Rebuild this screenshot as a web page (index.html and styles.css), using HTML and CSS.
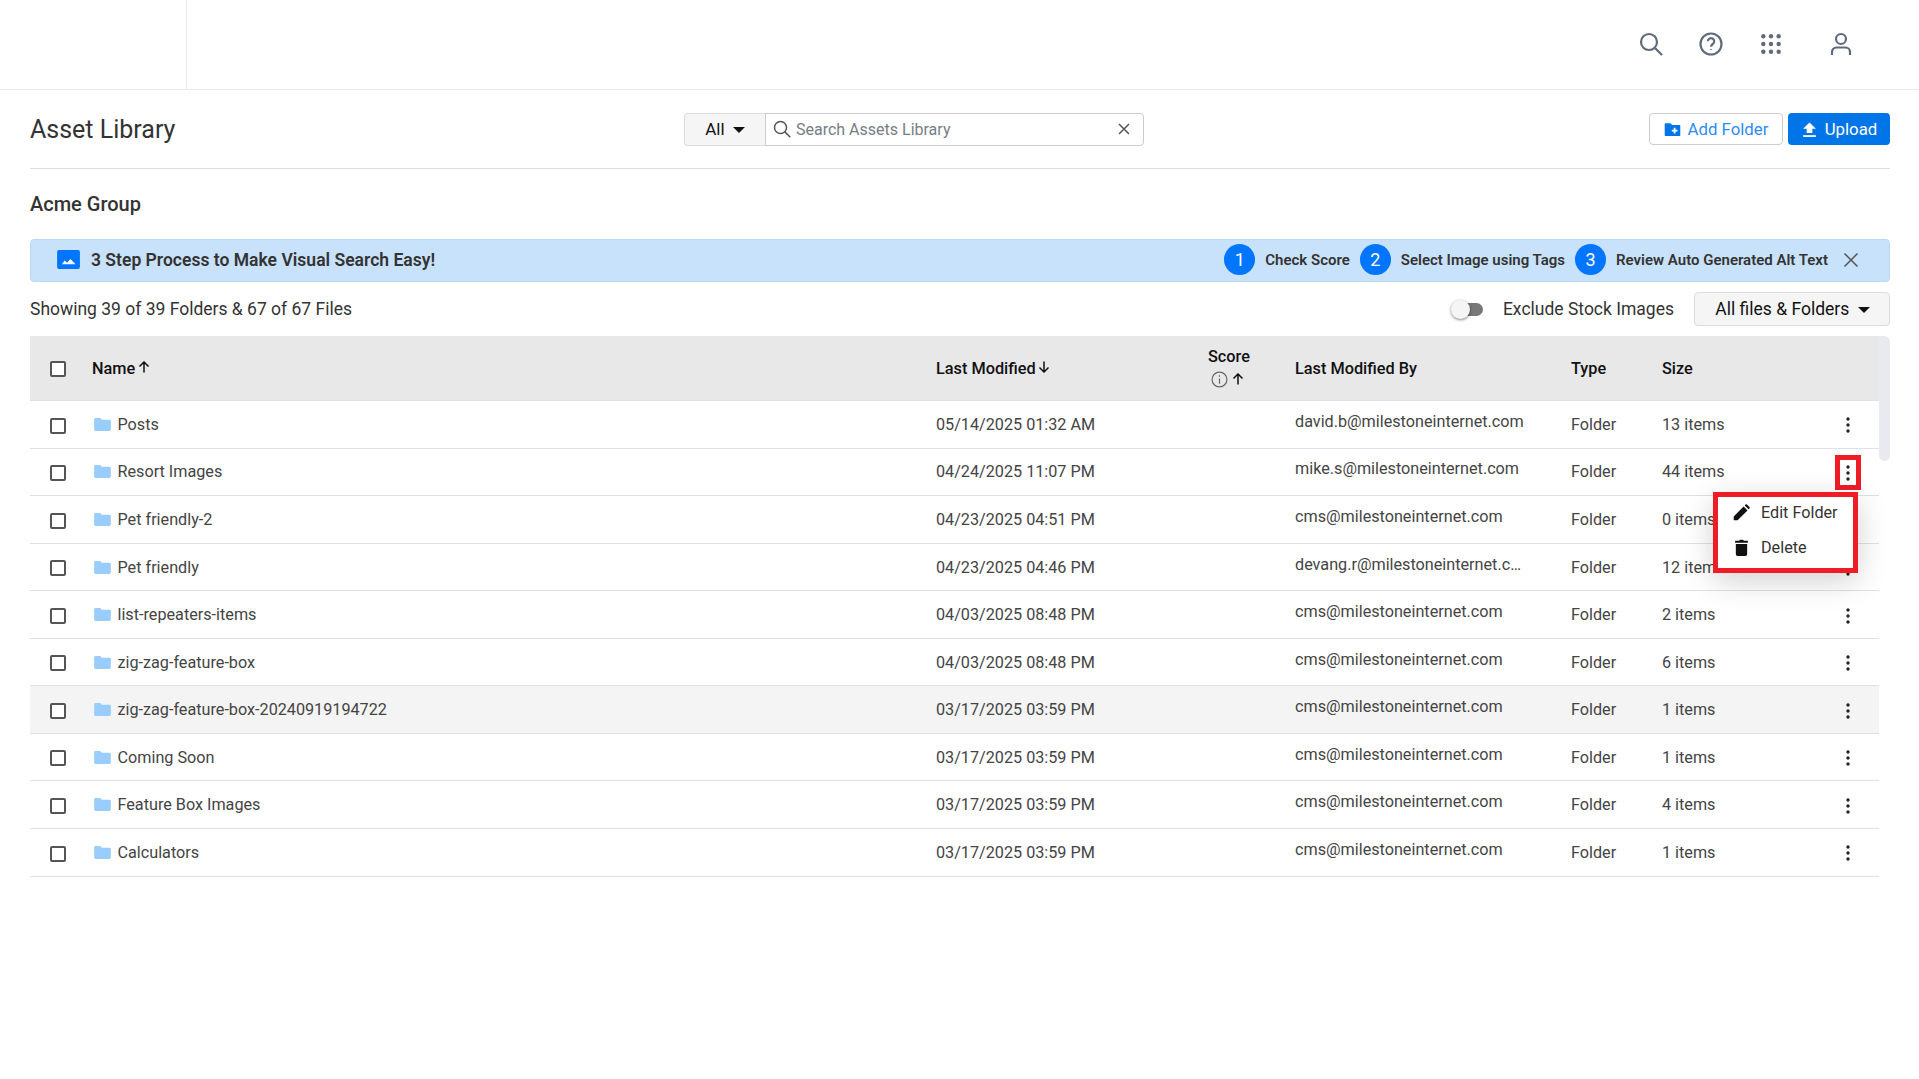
FILE: index.html
```html
<!DOCTYPE html>
<html lang="en">
<head>
    <meta charset="UTF-8">
    <title>Asset Library</title>
    <link rel="stylesheet" href="styles.css">
</head>
<body>
    <header class="topbar">
        <div class="logo-slot"></div>
        <div class="top-icons">
            <svg class="top-icon" viewBox="0 0 24 24"><circle cx="10" cy="10" r="8"/><path d="M16 16l7 7"/></svg>
            <svg class="top-icon" viewBox="0 0 24 24"><circle cx="12" cy="12" r="10.500"/><path d="M8.800 9.300a3.200 3.200 0 1 1 5 2.700c-1.100.8-1.800 1.400-1.800 2.700"/><path d="M12 17.200v.8"/></svg>
            <svg class="top-icon dots" viewBox="-0.500 -0.500 25 25"><circle cx="4" cy="4" r="2.300"/><circle cx="12" cy="4" r="2.300"/><circle cx="20" cy="4" r="2.300"/><circle cx="4" cy="12" r="2.300"/><circle cx="12" cy="12" r="2.300"/><circle cx="20" cy="12" r="2.300"/><circle cx="4" cy="20" r="2.300"/><circle cx="12" cy="20" r="2.300"/><circle cx="20" cy="20" r="2.300"/></svg>
            <svg class="top-icon" viewBox="0 0 24 24"><circle cx="12" cy="7" r="5"/><path d="M3 23v-3a4.500 4.500 0 0 1 4.500-4.500h9A4.500 4.500 0 0 1 21 20v3"/></svg>
        </div>
    </header>

    <main class="page">
        <div class="title-row">
            <h1>Asset Library</h1>
            <div class="search-group">
                <button class="search-type">All <span class="caret"></span></button>
                <div class="search-box">
                    <svg class="search-glass" viewBox="0 0 24 24"><circle cx="10" cy="10" r="8"/><path d="M15.500 15.500l7.500 7.500"/></svg>
                    <span class="placeholder">Search Assets Library</span>
                    <svg class="search-clear" viewBox="0 0 24 24"><path d="M2 2l20 20M22 2L2 22"/></svg>
                </div>
            </div>
            <div class="title-actions">
                <button class="btn-outline">
                    <svg viewBox="0 0 24 24"><path d="M2 3h7l2.500 2.500H22a1 1 0 0 1 1 1V20a1 1 0 0 1-1 1H2a1 1 0 0 1-1-1V4a1 1 0 0 1 1-1z" fill="#0075e8"/><path d="M15 9.500v8M11 13.500h8" stroke="#fff" stroke-width="2.400"/></svg>
                    Add Folder
                </button>
                <button class="btn-primary">
                    <svg viewBox="0 0 24 24"><path d="M12 2l9 9h-5v6H8v-6H3z" fill="#fff"/><path d="M3 20h18v2.500H3z" fill="#fff"/></svg>
                    Upload
                </button>
            </div>
        </div>

        <h2 class="group-name">Acme Group</h2>

        <div class="banner">
            <svg class="banner-icon" viewBox="0 0 24 20"><rect width="24" height="20" rx="2" fill="#0075ff"/><path d="M5 15l3-4 2.500 2.500L14 9.500l5.500 5.500z" fill="#fff"/></svg>
            <strong class="banner-title">3 Step Process to Make Visual Search Easy!</strong>
            <div class="steps">
                <span class="step-num">1</span><span class="step-label">Check Score</span>
                <span class="step-num">2</span><span class="step-label">Select Image using Tags</span>
                <span class="step-num">3</span><span class="step-label">Review Auto Generated Alt Text</span>
                <svg class="banner-close" viewBox="0 0 16 16"><path d="M1.500 1.500l13 13M14.500 1.500l-13 13"/></svg>
            </div>
        </div>

        <div class="filter-row">
            <span class="showing">Showing 39 of 39 Folders &amp; 67 of 67 Files</span>
            <div class="filters">
                <span class="toggle"><span class="toggle-knob"></span></span>
                <span class="toggle-label">Exclude Stock Images</span>
                <button class="filter-btn">All files &amp; Folders <span class="caret"></span></button>
            </div>
        </div>

        <div class="table-wrap">
            <table class="assets">
                <thead>
                    <tr>
                        <th class="col-check"><span class="check"></span></th>
                        <th class="col-name">Name<svg class="sort" viewBox="0 0 12 12"><path d="M6 11.500V1M1.500 5.500L6 1l4.500 4.500"/></svg></th>
                        <th class="col-date"><span class="date-head">Last Modified<svg class="sort" viewBox="0 0 12 12"><path d="M6 .5V11M1.500 6.500L6 11l4.500-4.500"/></svg></span></th>
                        <th class="col-score">
                            <span class="score-title">Score</span>
                            <span class="score-icons">
                                <svg class="info" viewBox="0 0 16 16"><circle cx="8" cy="8" r="7"/><path d="M8 7v5M8 4v1.500"/></svg>
                                <svg class="sort" viewBox="0 0 12 12"><path d="M6 11.500V1M1.500 5.500L6 1l4.500 4.500"/></svg>
                            </span>
                        </th>
                        <th class="col-by">Last Modified By</th>
                        <th class="col-type">Type</th>
                        <th class="col-size">Size</th>
                        <th class="col-more"></th>
                    </tr>
                </thead>
                <tbody id="rows"></tbody>
            </table>
            <div class="scroll-thumb"></div>

            <div class="row-menu">
                <div class="menu-item">
                    <svg viewBox="0 0 24 24"><path d="M1 23v-5.500L15 3.500 20.500 9 6.500 23zM16.500 2l1.200-1.200a1.500 1.500 0 0 1 2 0l3.500 3.500a1.500 1.500 0 0 1 0 2L22 7.500z"/></svg>
                    Edit Folder
                </div>
                <div class="menu-item">
                    <svg viewBox="0 0 24 24"><path d="M4 7h16v14.500a2.500 2.500 0 0 1-2.500 2.500h-11A2.500 2.500 0 0 1 4 21.500zM3 2.500h5.500L10 1h4l1.500 1.500H21v2.800H3z"/></svg>
                    Delete
                </div>
            </div>
        </div>
    </main>

    <script>
        const folders = [
            ['Posts', '05/14/2025 01:32 AM', 'david.b@milestoneinternet.com', '13 items'],
            ['Resort Images', '04/24/2025 11:07 PM', 'mike.s@milestoneinternet.com', '44 items'],
            ['Pet friendly-2', '04/23/2025 04:51 PM', 'cms@milestoneinternet.com', '0 items'],
            ['Pet friendly', '04/23/2025 04:46 PM', 'devang.r@milestoneinternet.c…', '12 items'],
            ['list-repeaters-items', '04/03/2025 08:48 PM', 'cms@milestoneinternet.com', '2 items'],
            ['zig-zag-feature-box', '04/03/2025 08:48 PM', 'cms@milestoneinternet.com', '6 items'],
            ['zig-zag-feature-box-20240919194722', '03/17/2025 03:59 PM', 'cms@milestoneinternet.com', '1 items'],
            ['Coming Soon', '03/17/2025 03:59 PM', 'cms@milestoneinternet.com', '1 items'],
            ['Feature Box Images', '03/17/2025 03:59 PM', 'cms@milestoneinternet.com', '4 items'],
            ['Calculators', '03/17/2025 03:59 PM', 'cms@milestoneinternet.com', '1 items']
        ];

        const folderIcon = '<svg class="folder" viewBox="0 0 18 14"><path d="M1.500 0h5l2 2h8A1.500 1.500 0 0 1 18 3.500v9a1.500 1.500 0 0 1-1.500 1.500h-15A1.500 1.500 0 0 1 0 12.500v-11A1.500 1.500 0 0 1 1.500 0z"/></svg>';
        const moreIcon = '<svg class="more" viewBox="0 0 4 16"><circle cx="2" cy="2" r="1.700"/><circle cx="2" cy="8" r="1.700"/><circle cx="2" cy="14" r="1.700"/></svg>';

        document.getElementById('rows').innerHTML = folders.map((f, i) => `
            <tr class="${i === 6 ? 'hovered' : ''}">
                <td><span class="check"></span></td>
                <td><span class="name-cell">${folderIcon}${f[0]}</span></td>
                <td>${f[1]}</td>
                <td></td>
                <td><span class="by-cell">${f[2]}</span></td>
                <td>Folder</td>
                <td>${f[3]}</td>
                <td class="more-cell"><span class="${i === 1 ? 'more-box' : 'more-plain'}">${moreIcon}</span></td>
            </tr>`).join('');
    </script>
</body>
</html>
```

FILE: styles.css
```css
* {
    margin: 0;
    padding: 0;
    box-sizing: border-box;
}

body {
    font-family: Roboto, "Liberation Sans", sans-serif;
    background-color: #fff;
    color: #212529;
    height: 1079px;
    overflow: hidden;
}

button {
    font-family: inherit;
    cursor: pointer;
}

.topbar {
    height: 90px;
    display: flex;
    justify-content: space-between;
    border-bottom: 1px solid #e9e9e9;
}

.logo-slot {
    width: 187px;
    border-right: 1px solid #e9e9e9;
}

.top-icons {
    display: flex;
    align-items: center;
    gap: 36px;
    padding-right: 66px;
    padding-bottom: 1px;
}

.top-icon {
    width: 24px;
    height: 24px;
    fill: none;
    stroke: #5f6b7c;
    stroke-width: 2.200;
}

.top-icon.dots {
    fill: #5f6b7c;
    stroke: none;
}

.top-icon:last-child {
    margin-left: 10px;
}

.page {
    padding: 0 29px 0 30px;
}

.title-row {
    height: 79px;
    display: grid;
    grid-template-columns: 654px 460px 1fr;
    align-items: center;
    border-bottom: 1px solid #dedede;
}

h1 {
    font-size: 25px;
    font-weight: 400;
    color: #333;
}

.search-group {
    display: flex;
    height: 33px;
}

.search-type {
    width: 81px;
    background-color: #f5f5f5;
    border: 1px solid #dcdcdc;
    border-right: 0;
    border-radius: 4px 0 0 4px;
    font-size: 17px;
    color: #111;
}

.caret {
    display: inline-block;
    width: 0;
    height: 0;
    margin-left: 4px;
    vertical-align: 2px;
    border-left: 6px solid transparent;
    border-right: 6px solid transparent;
    border-top: 6px solid #111;
}

.search-box {
    flex: 1;
    display: flex;
    align-items: center;
    border: 1px solid #ccc;
    border-radius: 0 4px 4px 0;
    padding: 0 13px 0 7px;
}

.search-glass {
    width: 18px;
    height: 18px;
    fill: none;
    stroke: #555;
    stroke-width: 2;
    margin-right: 5px;
}

.placeholder {
    flex: 1;
    font-size: 16px;
    color: #757d86;
}

.search-clear {
    width: 12px;
    height: 12px;
    fill: none;
    stroke: #555;
    stroke-width: 3;
}

.title-actions {
    display: flex;
    justify-content: flex-end;
    gap: 5px;
}

.btn-outline,
.btn-primary {
    height: 32px;
    display: flex;
    align-items: center;
    justify-content: center;
    gap: 7px;
    font-size: 16.800px;
    border-radius: 4px;
}

.btn-outline svg,
.btn-primary svg {
    width: 17px;
    height: 17px;
}

.btn-outline {
    width: 134px;
    background-color: #fff;
    border: 1px solid #ccc;
    color: #2f8cf5;
}

.btn-primary {
    width: 102px;
    background-color: #0075e8;
    border: 0;
    color: #fff;
}

.group-name {
    font-size: 20px;
    font-weight: 500;
    color: #333;
    margin-top: 24px;
    height: 46px;
    line-height: 22px;
}

.banner {
    height: 43px;
    display: flex;
    align-items: center;
    background-color: #c9e2fc;
    border: 1px solid #b9d8f8;
    border-radius: 4px;
    padding: 0 30px 2px 26px;
}

.banner-icon {
    width: 23px;
    height: 19px;
    margin-right: 11px;
}

.banner-title {
    flex: 1;
    font-size: 17.550px;
    font-weight: 600;
    color: #333;
}

.steps {
    display: flex;
    align-items: center;
}

.step-num {
    width: 31px;
    height: 31px;
    border-radius: 50%;
    background-color: #0075ff;
    color: #fff;
    font-size: 18px;
    display: flex;
    align-items: center;
    justify-content: center;
    margin-right: 10px;
}

.step-label {
    font-size: 15px;
    font-weight: 600;
    color: #333;
    margin-right: 10px;
}

.banner-close {
    width: 16px;
    height: 16px;
    fill: none;
    stroke: #555;
    stroke-width: 1.500;
    margin-left: 5px;
}

.filter-row {
    height: 54px;
    display: flex;
    align-items: center;
    justify-content: space-between;
}

.showing {
    font-size: 17.500px;
    color: #333;
}

.filters {
    display: flex;
    align-items: center;
}

.toggle {
    position: relative;
    width: 28px;
    height: 13px;
    background-color: #777;
    border-radius: 7px;
    margin-right: 20px;
}

.toggle-knob {
    position: absolute;
    left: -4px;
    top: -3px;
    width: 19px;
    height: 19px;
    border-radius: 50%;
    background-color: #f5f5f5;
    box-shadow: 0 1px 3px rgba(0, 0, 0, 0.5);
}

.toggle-label {
    font-size: 17.500px;
    color: #333;
    margin-right: 20px;
}

.filter-btn {
    width: 196px;
    height: 34px;
    padding-left: 1px;
    background-color: #f5f5f5;
    border: 1px solid #dcdcdc;
    border-radius: 4px;
    font-size: 17.500px;
    color: #111;
}

.table-wrap {
    position: relative;
    padding-right: 11px;
}

.assets {
    width: 100%;
    border-collapse: collapse;
    table-layout: fixed;
    font-size: 16.200px;
    color: #444;
}

.assets th {
    height: 64.600px;
    background-color: #e8e8e8;
    text-align: left;
    font-size: 16.300px;
    font-weight: 500;
    color: #111;
    border-bottom: 1px solid #dee2e6;
}

.assets td {
    height: 47.560px;
    border-bottom: 1px solid #dee2e6;
    white-space: nowrap;
}

.assets tr.hovered td {
    background-color: #f4f4f4;
}

.col-check { width: 62px; }
.col-name { width: 844px; }
.col-date { width: 272px; }
.col-score { width: 87px; }
.col-by { width: 276px; }
.col-type { width: 91px; }
.col-size { width: 160px; }

.assets th:first-child,
.assets td:first-child {
    text-align: center;
    padding-right: 6px;
}

.check {
    display: inline-block;
    width: 16px;
    height: 16px;
    border: 2px solid #555;
    border-radius: 2px;
    background-color: #fff;
    vertical-align: middle;
}

.col-name .sort {
    margin-left: 3px;
    vertical-align: 1px;
}

.date-head .sort {
    margin-left: 2px;
    vertical-align: 1px;
}

.sort {
    width: 12px;
    height: 12px;
    fill: none;
    stroke: #111;
    stroke-width: 1.500;
}

.score-title {
    display: block;
    line-height: 22px;
    margin-top: -3px;
    margin-bottom: 3px;
}

.score-icons {
    display: flex;
    align-items: center;
    gap: 4px;
    padding-left: 3px;
}

.info {
    width: 17px;
    height: 17px;
    fill: none;
    stroke: #666;
    stroke-width: 1.100;
}

.name-cell {
    display: flex;
    align-items: center;
    gap: 6.500px;
    padding-left: 2px;
}

.folder {
    width: 17px;
    height: 13px;
    fill: #99cdfd;
}

.by-cell {
    position: relative;
    top: -3px;
}

.more-cell {
    text-align: center;
    padding: 2px 5px 0 0;
}

.more-plain,
.more-box {
    display: inline-flex;
    align-items: center;
    justify-content: center;
    width: 26px;
    height: 35px;
    vertical-align: middle;
}

.more-box {
    outline: 5px solid #ee1c25;
    outline-offset: -5px;
}

.more {
    width: 4px;
    height: 16px;
    fill: #222;
}

.scroll-thumb {
    position: absolute;
    right: 0;
    top: 0;
    width: 11px;
    height: 125px;
    background-color: #e8eaef;
    border-radius: 0 6px 6px 6px;
}

.row-menu {
    position: absolute;
    right: 32px;
    top: 156px;
    width: 145px;
    height: 81px;
    background-color: #fff;
    border: 5px solid #ee1c25;
    box-shadow: 0 8px 30px rgba(0, 0, 0, 0.18);
    display: flex;
    flex-direction: column;
    gap: 3px;
}

.menu-item {
    display: flex;
    align-items: center;
    gap: 11px;
    height: 31.500px;
    padding-left: 15px;
    font-size: 16.200px;
    color: #333;
}

.menu-item svg {
    width: 17px;
    height: 17px;
    fill: #111;
}
```
